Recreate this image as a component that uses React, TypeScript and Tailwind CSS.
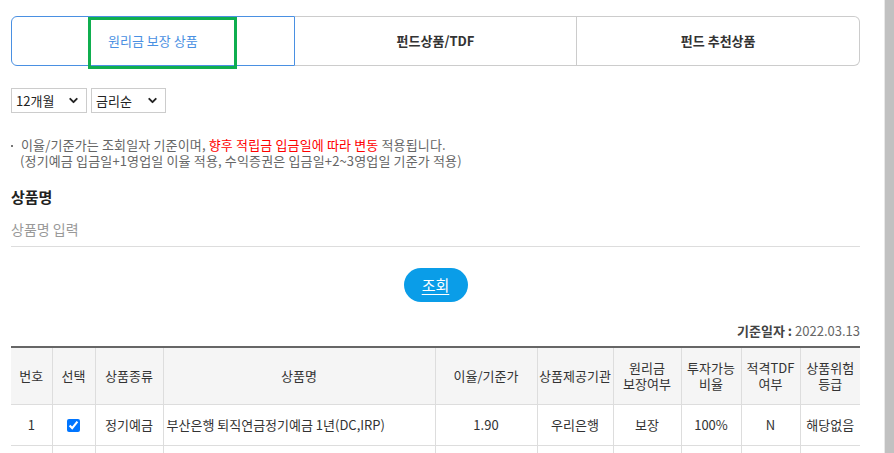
import { ChevronDown } from 'lucide-react'

const font = { fontFamily: '"Noto Sans CJK KR", "Liberation Sans", sans-serif' }

interface Column {
  label: string[]
  width: string
}

const columns: Column[] = [
  { label: ['번호'], width: 'w-[41px]' },
  { label: ['선택'], width: 'w-[43px]' },
  { label: ['상품종류'], width: 'w-[68px]' },
  { label: ['상품명'], width: 'w-[272px]' },
  { label: ['이율/기준가'], width: 'w-[102px]' },
  { label: ['상품제공기관'], width: 'w-[76px]' },
  { label: ['원리금', '보장여부'], width: 'w-[68px]' },
  { label: ['투자가능', '비율'], width: 'w-[60px]' },
  { label: ['적격TDF', '여부'], width: 'w-[59px]' },
  { label: ['상품위험', '등급'], width: 'w-[60px]' },
]

function SelectBox({ value, width }: { value: string; width: string }) {
  return (
    <div className={`flex h-[25px] ${width} items-center justify-between border border-[#cccccc] bg-white pl-[4px] pr-[6px] text-[13px] text-[#222]`}>
      <span>{value}</span>
      <ChevronDown size={13} strokeWidth={3.5} className="text-[#222]" />
    </div>
  )
}

export default function App() {
  return (
    <div className="flex h-[453px] w-[894px] overflow-hidden bg-white" style={font}>
      <div className="w-[884px] pl-[11px] pr-[24px]">
        {/* tabs */}
        <div className="relative mt-[16px] flex h-[50px] text-[13px]">
          <div className="flex flex-1 items-center justify-center rounded-l-[6px] border border-[#4a90e2] text-[#4a90e2]">
            원리금 보장 상품
          </div>
          <div className="flex flex-1 items-center justify-center border-y border-r border-[#cccccc] font-bold text-[#333]">
            펀드상품/TDF
          </div>
          <div className="flex flex-1 items-center justify-center rounded-r-[6px] border-y border-r border-[#cccccc] font-bold text-[#333]">
            펀드 추천상품
          </div>
          <div className="absolute left-[77px] top-[1px] h-[52px] w-[149px] border-[3px] border-[#0fae4f]" />
        </div>

        {/* selects */}
        <div className="mt-[22px] flex gap-[4px]">
          <SelectBox value="12개월" width="w-[76px]" />
          <SelectBox value="금리순" width="w-[75px]" />
        </div>

        {/* notice */}
        <div className="mt-[24px] text-[13px] leading-[16px] tracking-[0.15px] text-[#666]">
          <div className="flex">
            <span className="mr-[8px] mt-[8px] h-[2px] w-[2px] shrink-0 bg-[#777]" />
            <span>
              이율/기준가는 조회일자 기준이며, <span className="text-[#ff0000]">향후 적립금 입금일에 따라 변동</span> 적용됩니다.
            </span>
          </div>
          <div className="pl-[9px]">(정기예금 입금일+1영업일 이율 적용, 수익증권은 입금일+2~3영업일 기준가 적용)</div>
        </div>

        {/* product name */}
        <div className="mt-[18px] text-[15px] font-bold leading-[20px] text-[#222]">상품명</div>
        <div className="mt-[12px] border-b border-[#dddddd] pb-[7px] text-[14px] leading-[20px] text-[#999]">상품명 입력</div>

        <div className="mt-[21px] flex justify-center">
          <button className="h-[34px] w-[64px] rounded-full bg-[#0a9de8] text-[15px] text-white underline underline-offset-[3px]">
            조회
          </button>
        </div>

        <div className="mt-[20px] text-right text-[13px] leading-[18px] text-[#666]">
          <span className="font-bold text-[#444]">기준일자 : </span>2022.03.13
        </div>

        {/* table */}
        <table className="mt-[6px] w-[849px] table-fixed border-collapse text-[13px] text-[#333]">
          <colgroup>
            {columns.map((c) => (
              <col key={c.label.join('')} className={c.width} />
            ))}
          </colgroup>
          <thead>
            <tr className="h-[57px] border-t-2 border-[#666] bg-[#f5f5f5]">
              {columns.map((c, i) => (
                <th
                  key={c.label.join('')}
                  className={`border-b border-[#dddddd] px-0 font-normal leading-[16px] ${i > 0 ? 'border-l border-l-[#dddddd]' : ''}`}
                >
                  {c.label.map((l) => (
                    <div key={l}>{l}</div>
                  ))}
                </th>
              ))}
            </tr>
          </thead>
          <tbody>
            <tr className="h-[41px] border-b border-[#dddddd]">
              <td className="text-center">1</td>
              <td className="border-l border-[#dddddd] text-center">
                <input type="checkbox" defaultChecked className="h-[13px] w-[13px] translate-y-[2px] accent-[#0075ff]" />
              </td>
              <td className="border-l border-[#dddddd] text-center">정기예금</td>
              <td className="border-l border-[#dddddd] pl-[3px]">부산은행 퇴직연금정기예금 1년(DC,IRP)</td>
              <td className="border-l border-[#dddddd] text-center">1.90</td>
              <td className="border-l border-[#dddddd] text-center">우리은행</td>
              <td className="border-l border-[#dddddd] text-center">보장</td>
              <td className="border-l border-[#dddddd] text-center">100%</td>
              <td className="border-l border-[#dddddd] text-center">N</td>
              <td className="border-l border-[#dddddd] text-center">해당없음</td>
            </tr>
            <tr className="h-[41px]">
              {columns.map((c, i) => (
                <td key={c.label.join('')} className={i > 0 ? 'border-l border-[#dddddd]' : ''} />
              ))}
            </tr>
          </tbody>
        </table>
      </div>
      <div className="w-[10px] border-l border-[#e8e8e8] bg-[#c1c1c1]" />
    </div>
  )
}
